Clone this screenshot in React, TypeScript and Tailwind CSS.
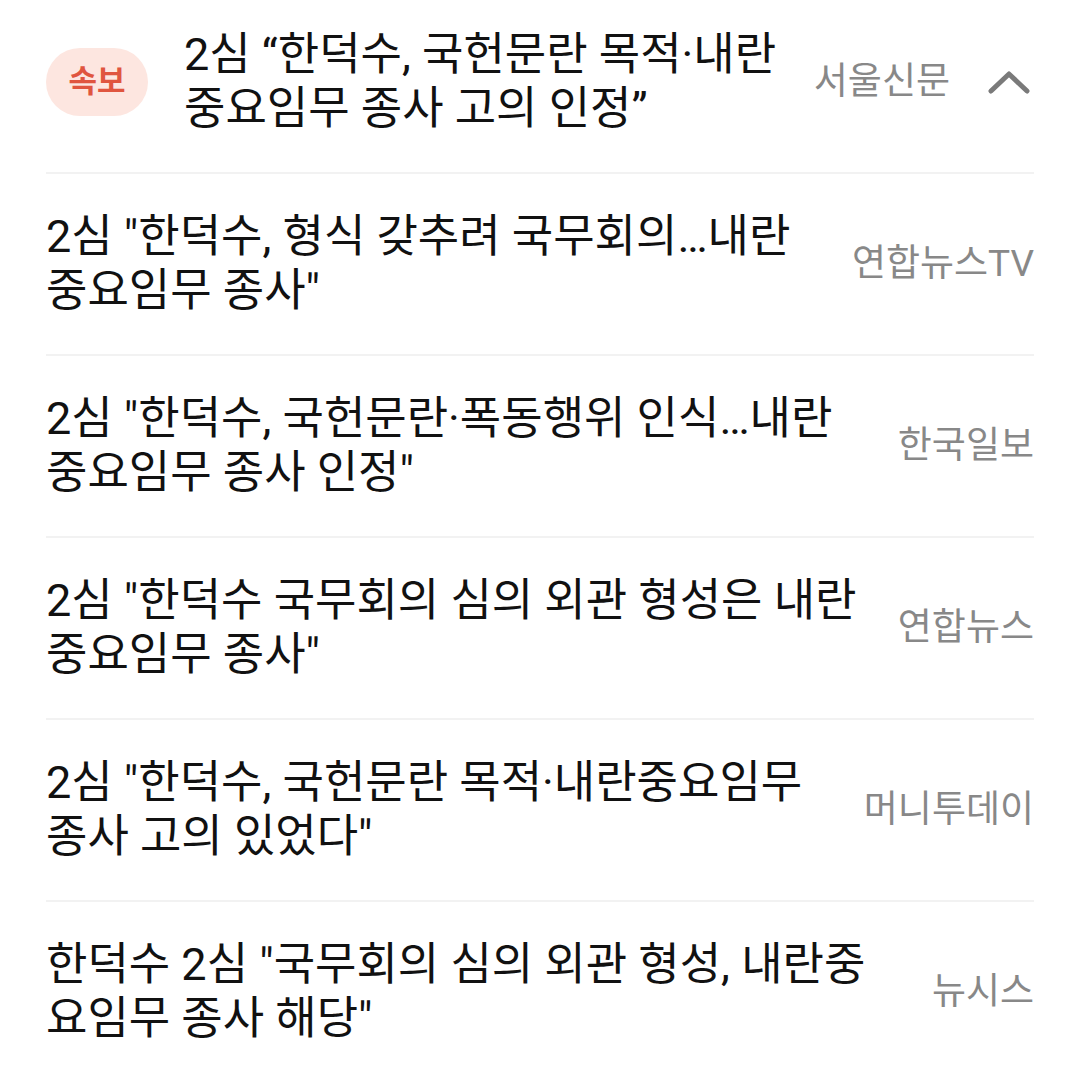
import React from "react";

const items = [
  { title: '2심 "한덕수, 형식 갖추려 국무회의…내란 중요임무 종사"', source: "연합뉴스TV" },
  { title: '2심 "한덕수, 국헌문란·폭동행위 인식…내란 중요임무 종사 인정"', source: "한국일보" },
  { title: '2심 "한덕수 국무회의 심의 외관 형성은 내란 중요임무 종사"', source: "연합뉴스" },
  { title: '2심 "한덕수, 국헌문란 목적·내란중요임무 종사 고의 있었다"', source: "머니투데이" },
  { title: '한덕수 2심 "국무회의 심의 외관 형성, 내란중요임무 종사 해당"', source: "뉴시스" },
];

const font = { fontFamily: 'Roboto, "Noto Sans CJK KR", sans-serif' };

export default function App() {
  return (
    <div className="w-[1080px] bg-white px-[46px]" style={font}>
      <div className="flex items-center pt-[28px] pb-[36px] border-b-2 border-[#f2f2f2]">
        <div className="shrink-0 w-[102px] h-[68px] rounded-full bg-[#fde6e0] flex items-center justify-center text-[#e0553f] text-[31px] font-bold">
          속보
        </div>
        <div className="flex-1 ml-[36px] mr-[32px] text-[45px] leading-[54px] text-[#111]">
          2심 “한덕수, 국헌문란 목적·내란 중요임무 종사 고의 인정”
        </div>
        <div className="shrink-0 text-[37px] text-[#888]">서울신문</div>
        <svg className="shrink-0 ml-[38px] mr-[4px]" width="42" height="26" viewBox="0 0 42 26">
          <path d="M3 22 L21 5 L39 22" fill="none" stroke="#7a7a7a" strokeWidth="5" strokeLinecap="round" strokeLinejoin="round" />
        </svg>
      </div>
      {items.map((it, i) => (
        <div
          key={i}
          className={"flex items-center py-[36px] " + (i < items.length - 1 ? "border-b-2 border-[#f2f2f2]" : "")}
        >
          <div className="flex-1 mr-[40px] text-[45px] leading-[54px] text-[#111]">{it.title}</div>
          <div className="shrink-0 text-[37px] text-[#888]">{it.source}</div>
        </div>
      ))}
    </div>
  );
}
